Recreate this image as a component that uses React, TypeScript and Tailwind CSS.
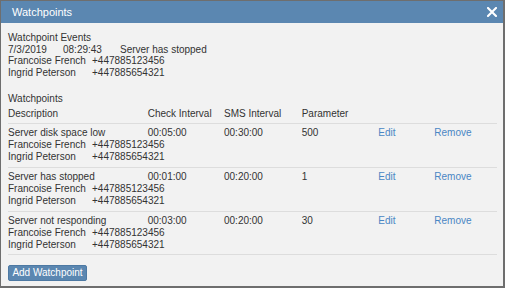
import React from 'react';

interface Person {
    name: string;
    phone: string;
}

interface Watchpoint {
    description: string;
    check: string;
    sms: string;
    parameter: string;
}

const people: Person[] = [
    { name: 'Francoise French', phone: '+447885123456' },
    { name: 'Ingrid Peterson', phone: '+447885654321' },
];

const watchpoints: Watchpoint[] = [
    { description: 'Server disk space low', check: '00:05:00', sms: '00:30:00', parameter: '500' },
    { description: 'Server has stopped', check: '00:01:00', sms: '00:20:00', parameter: '1' },
    { description: 'Server not responding', check: '00:03:00', sms: '00:20:00', parameter: '30' },
];

const cols = 'grid grid-cols-[139.7px_76.3px_77.7px_76.6px_56px_1fr]';

const PeopleList: React.FC<{ leading: string }> = ({ leading }) => (
    <div className={`grid grid-cols-[84px_1fr] ${leading}`}>
        {people.map(p => (
            <React.Fragment key={p.name}>
                <span>{p.name}</span>
                <span>{p.phone}</span>
            </React.Fragment>
        ))}
    </div>
);

const App: React.FC = () => {
    return (
        <div className="w-[505px] h-[288px] flex flex-col bg-[#f2f2f2] border-t border-l border-r-2 border-b-2 border-[#6e6e6e] text-[#333333] text-[10px] font-['Liberation_Sans',Arial,sans-serif] overflow-hidden">
            <div className="h-[22px] shrink-0 bg-[#5b87b1] flex items-center justify-between pl-[11px] pr-[6px]">
                <span className="text-white text-[11px]">Watchpoints</span>
                <svg width="10" height="10" viewBox="0 0 10 10" className="block">
                    <path d="M1 1 L9 9 M9 1 L1 9" stroke="#ffffff" strokeWidth="2.1" strokeLinecap="square" />
                </svg>
            </div>
            <div className="pt-[9px] pl-[7px] pr-[6px] flex flex-col">
                <div className="leading-[11.7px]">
                    <div>Watchpoint Events</div>
                    <div className="flex">
                        <span className="w-[55px]">7/3/2019</span>
                        <span className="w-[57px]">08:29:43</span>
                        <span>Server has stopped</span>
                    </div>
                    <PeopleList leading="leading-[11.7px]" />
                </div>

                <div className="mt-[14px] leading-[11.6px]">Watchpoints</div>
                <div className={`${cols} leading-[11.6px] pt-[3.4px] pb-[3.7px]`}>
                    <span>Description</span>
                    <span>Check Interval</span>
                    <span>SMS Interval</span>
                    <span>Parameter</span>
                    <span></span>
                    <span></span>
                </div>
                {watchpoints.map(w => (
                    <div key={w.description} className="border-t border-[#dddddd] pt-[3px] pb-[3.2px]">
                        <div className={`${cols} leading-[12.2px]`}>
                            <span>{w.description}</span>
                            <span>{w.check}</span>
                            <span>{w.sms}</span>
                            <span>{w.parameter}</span>
                            <a className="text-[#4a86c4] cursor-pointer">Edit</a>
                            <a className="text-[#4a86c4] cursor-pointer">Remove</a>
                        </div>
                        <PeopleList leading="leading-[12.2px]" />
                    </div>
                ))}
                <div className="border-t border-[#dddddd]" />

                <div className="mt-[10px]">
                    <button className="h-[16px] w-[79px] bg-[#5b87b1] border border-[#4d79a3] rounded-[2px] text-white text-[10px] leading-none flex items-center justify-center">
                        Add Watchpoint
                    </button>
                </div>
            </div>
        </div>
    );
};

export default App;
